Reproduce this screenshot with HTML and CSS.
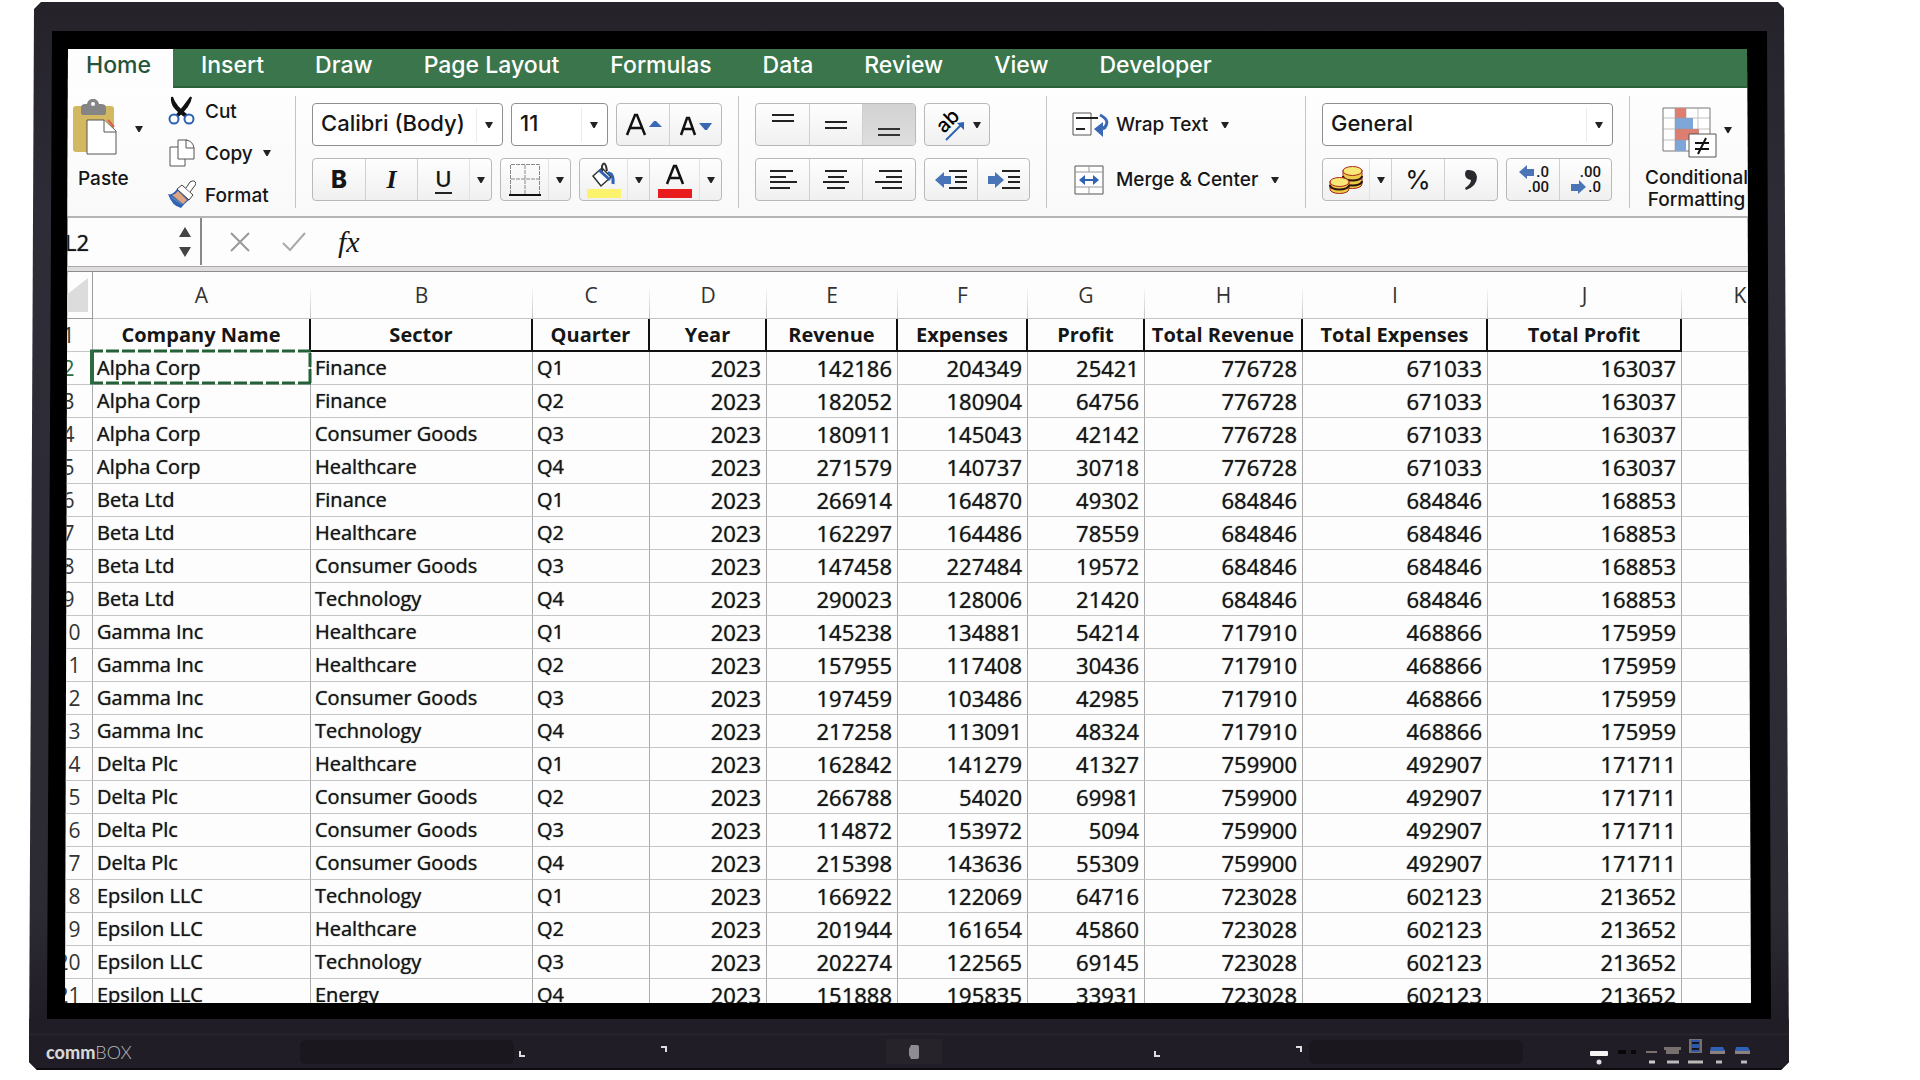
FILE: index.html
```html
<!DOCTYPE html>
<html lang="en">
<head>
<meta charset="utf-8">
<title>Workbook on display</title>
<link rel="stylesheet" href="styles.css">
</head>
<body>
<svg class="defs" aria-hidden="true">
  <symbol id="caret" viewBox="0 0 10 8"><path d="M1 1h8L5.600 7h-1.200z" fill="#222"/></symbol>
</svg>
<div class="display">
  <div class="bezel">
    <main class="screen">
      <nav class="tabs">
        <a class="tab active" href="#">Home</a>
        <a class="tab" href="#">Insert</a>
        <a class="tab" href="#">Draw</a>
        <a class="tab" href="#">Page Layout</a>
        <a class="tab" href="#">Formulas</a>
        <a class="tab" href="#">Data</a>
        <a class="tab" href="#">Review</a>
        <a class="tab" href="#">View</a>
        <a class="tab" href="#">Developer</a>
      </nav>

      <section class="ribbon">
        <div class="clipboard">
          <button class="paste">
            <span class="paste-top">
              <svg width="46" height="56" viewBox="0 0 46 56"><rect x="1" y="7" width="41" height="46" rx="3" fill="#d3b863"/><path d="M9 9c0-4 3-4 6-4 1-7 11-7 12 0 4 0 7 0 7 4v5q0 2-2 2H11q-2 0-2-2z" fill="#858585"/><circle cx="21" cy="5" r="2" fill="#fff"/><path d="M15 21h17l12 11v23H15z" fill="#fff" stroke="#555"/><path d="M32 21v12h12" fill="#fff" stroke="#555"/><path d="M36 21l6 7" stroke="#d9604c" stroke-width="2"/></svg>
              <svg class="caret"><use href="#caret"/></svg>
            </span>
            <span>Paste</span>
          </button>
          <div class="clip-actions">
            <button><svg width="28" height="30" viewBox="0 0 28 30"><path d="M4 1c2 7 6 12 16 19l-2 1C8 14 3 9 4 1zM23 1c-1 7-5 12-13 19l-1-1C15 12 18 8 23 1z" fill="#111" stroke="#111" stroke-width="2"/><ellipse cx="6" cy="23" rx="4.500" ry="4.500" fill="#fff" stroke="#2d5fb3" stroke-width="2"/><ellipse cx="21" cy="23" rx="4.500" ry="4.500" fill="#fff" stroke="#2d5fb3" stroke-width="2"/></svg>Cut</button>
            <button><svg width="28" height="30" viewBox="0 0 28 30"><path d="M2 9h15v19H2z" fill="#fff" stroke="#555"/><path d="M10 2h9l7 8v11H10z" fill="#fff" stroke="#555"/><path d="M18 2v8h8q-1-7-8-8" fill="#fff" stroke="#555"/></svg>Copy<svg class="caret"><use href="#caret"/></svg></button>
            <button><svg width="28" height="30" viewBox="0 0 28 30"><path d="M0 14q4 2 9-5l12 11q-4 3-8 8Q4 26 0 14z" fill="#2f62b5"/><path d="M4 15q4-1 6-4l9 9-4 4z" fill="#e0a480"/><path d="M3 17l11 7" stroke="#5d7cb5" stroke-width="2"/><path d="M9 9l5-4 11 10-4 5z" fill="#fff" stroke="#444"/><path d="M18 8l4-6q5-3 6 2l-6 8" fill="#fff" stroke="#444"/></svg>Format</button>
          </div>
        </div>

        <div class="group">
          <div class="line">
            <label class="combo font-name"><select aria-label="Font"><option>Calibri (Body)</option></select><svg class="caret"><use href="#caret"/></svg></label>
            <label class="combo font-size"><select aria-label="Font size"><option>11</option></select><svg class="caret"><use href="#caret"/></svg></label>
            <div class="set">
              <button class="w52" aria-label="Increase font size"><svg width="38" height="30" viewBox="0 0 38 30"><path d="M3 25L11 5h2l8 20M6 18h12" fill="none" stroke="#111" stroke-width="2.500"/><path d="M25 17l5-6h2l6 6z" fill="#3a68b5"/></svg></button>
              <button class="w52" aria-label="Decrease font size"><svg width="34" height="30" viewBox="0 0 34 30"><path d="M2 25L8 8h2l6 17M4 19h10" fill="none" stroke="#111" stroke-width="2.500"/><path d="M20 13h13l-5 7h-2z" fill="#3a68b5"/></svg></button>
            </div>
          </div>
          <div class="line">
            <div class="set">
              <button class="w52 bold">B</button>
              <button class="w52 italic">I</button>
              <button class="w52"><span class="underlined">U</span></button>
              <button class="drop" aria-label="Underline styles"><svg class="caret"><use href="#caret"/></svg></button>
            </div>
            <div class="set">
              <button class="w47" aria-label="Borders"><svg width="32" height="34" viewBox="0 0 32 34"><path d="M1.500 31V1.500h29V31M16 2v29M2 16h28" fill="none" stroke="#888" stroke-dasharray="4 1"/><path d="M0 32h32" stroke="#111" stroke-width="2"/></svg></button>
              <button class="drop" aria-label="Border styles"><svg class="caret"><use href="#caret"/></svg></button>
            </div>
            <div class="set">
              <button class="w47" aria-label="Fill colour"><svg width="34" height="36" viewBox="0 0 34 36"><path d="M0 27h34v9H0z" fill="#fbf36b"/><path d="M6 14L15 6l9 9-10 9z" fill="#fff" stroke="#333" stroke-width="1.500"/><path d="M15 11V4q2-5 4 0l1 5" fill="none" stroke="#333" stroke-width="2"/><path d="M12 8l11 10M21 11q6 0 5 11" fill="none" stroke="#2f62b5" stroke-width="3"/></svg></button>
              <button class="drop" aria-label="Fill palette"><svg class="caret"><use href="#caret"/></svg></button>
              <button class="w50 ruled" aria-label="Font colour"><svg width="34" height="36" viewBox="0 0 34 36"><path d="M0 27h34v9H0z" fill="#e81c1c"/><path d="M9 22l7-18h2l7 18M12 16h10" fill="none" stroke="#111" stroke-width="2.500"/></svg></button>
              <button class="drop" aria-label="Font palette"><svg class="caret"><use href="#caret"/></svg></button>
            </div>
          </div>
        </div>

        <div class="group">
          <div class="line">
            <div class="set">
              <button class="w53" aria-label="Align top"><svg width="28" height="30"><path d="M3 5h22M3 11h22" stroke="#222" stroke-width="2"/></svg></button>
              <button class="w53" aria-label="Align middle"><svg width="28" height="30"><path d="M3 12h22M3 18h22" stroke="#222" stroke-width="2"/></svg></button>
              <button class="w53 pressed" aria-label="Align bottom"><svg width="28" height="30"><path d="M3 19h22M3 25h22" stroke="#333" stroke-width="2"/></svg></button>
            </div>
            <div class="set">
              <button class="w64" aria-label="Orientation"><svg class="orient" width="34" height="34" viewBox="0 0 34 34"><text x="0" y="0" transform="translate(12 26) rotate(-45)" class="slanted">ab</text><path d="M14 32L29 17" stroke="#2f62b5" stroke-width="2"/><path d="M32 14v8l-7-7z" fill="#2f62b5"/></svg><svg class="caret"><use href="#caret"/></svg></button>
            </div>
          </div>
          <div class="line">
            <div class="set">
              <button class="w53" aria-label="Align left"><svg width="30" height="22"><path d="M2 2h23M2 8h16M2 13h27M2 19h20" stroke="#222" stroke-width="2"/></svg></button>
              <button class="w53" aria-label="Centre"><svg width="30" height="22"><path d="M4 2h22M7 8h16M2 13h26M6 19h18" stroke="#222" stroke-width="2"/></svg></button>
              <button class="w53" aria-label="Align right"><svg width="30" height="22"><path d="M5 2h23M12 8h16M1 13h27M8 19h20" stroke="#222" stroke-width="2"/></svg></button>
            </div>
            <div class="set">
              <button class="w52" aria-label="Decrease indent"><svg width="32" height="22"><path d="M14 2h18M20 8h12M20 13h12M14 19h18" stroke="#222" stroke-width="2"/><path d="M0 11l9-8v4h7v8H9v4z" fill="#4a74b8"/></svg></button>
              <button class="w52" aria-label="Increase indent"><svg width="32" height="22"><path d="M14 2h18M20 8h12M20 13h12M14 19h18" stroke="#222" stroke-width="2"/><path d="M16 11L7 3v4H0v8h7v4z" fill="#4a74b8"/></svg></button>
            </div>
          </div>
        </div>

        <div class="group wrapping">
          <div class="line"><button class="plain"><svg width="38" height="26" viewBox="0 0 38 26"><path d="M1 1h18v22H1z" fill="#fff" stroke="#555"/><path d="M4 6h22M4 17h9" stroke="#222" stroke-width="2"/><path d="M28 3q12 6 3 14" fill="none" stroke="#3a68b5" stroke-width="3"/><path d="M22 17l9-7v4l4 2-4 2v7z" fill="#3a68b5"/></svg>Wrap Text<svg class="caret"><use href="#caret"/></svg></button></div>
          <div class="line"><button class="plain"><svg width="38" height="30" viewBox="0 0 38 30"><path d="M3 1h28v28H3z" fill="#fff" stroke="#555"/><path d="M3 7h28M3 22h28M17 1v6M17 22v7" stroke="#999"/><path d="M10 15h14" stroke="#2f62b5" stroke-width="2"/><path d="M7 15l6-5v10zM27 15l-6-5v10z" fill="#2f62b5"/></svg>Merge &amp; Center<svg class="caret"><use href="#caret"/></svg></button></div>
        </div>

        <div class="group">
          <div class="line">
            <label class="combo number-format"><select aria-label="Number format"><option>General</option></select><svg class="caret"><use href="#caret"/></svg></label>
          </div>
          <div class="line">
            <div class="set">
              <button class="w46" aria-label="Accounting format"><svg width="36" height="30" viewBox="0 0 36 30"><g stroke="#a8281c" fill="#edca48"><path d="M15 5v14c0 6 19 6 19 0V5z"/><path d="M15 11c0 6 19 6 19 0M15 16c0 6 19 6 19 0" fill="none" stroke="#2a1410" stroke-width="2"/><ellipse cx="24.500" cy="6" rx="9.500" ry="4.500" fill="#f8e877"/><path d="M2 16v8c0 6 19 6 19 0v-8z"/><path d="M2 20c0 6 19 6 19 0" fill="none" stroke="#2a1410" stroke-width="2"/><ellipse cx="11.500" cy="17" rx="9.500" ry="4.500" fill="#f8e877"/></g></svg></button>
              <button class="drop" aria-label="Currency"><svg class="caret"><use href="#caret"/></svg></button>
              <button class="w53 ruled percent">%</button>
              <button class="w53" aria-label="Comma style"><svg width="14" height="22" viewBox="0 0 14 22"><path d="M3 1Q12 0 13 8q0 9-11 13l-1-2q6-4 6-8-6-1-6-6 0-3 2-4z" fill="#2a2a2e"/></svg></button>
            </div>
            <div class="set">
              <button class="w52 decimals" aria-label="Increase decimal"><span><svg width="15" height="14"><path d="M0 7l8-7v4h7v7H8v3z" fill="#4a74b8"/></svg>.0</span><span>.00</span></button>
              <button class="w52 decimals" aria-label="Decrease decimal"><span>.00</span><span><svg width="15" height="14"><path d="M15 7L8 0v4H0v7h7v3z" fill="#4a74b8"/></svg>.0</span></button>
            </div>
          </div>
        </div>

        <button class="conditional">
          <span class="cond-top">
            <svg width="55" height="52" viewBox="0 0 55 52"><path d="M1 1h47v43H1z" fill="#fff" stroke="#777"/><path d="M13 1h11v10H13zM13 22h24v11H13z" fill="#dd7e70"/><path d="M13 11h18v11H13zM13 33h11v11H13z" fill="#7fa6d8"/><path d="M13 1v43M24 1v10M36 1v43M1 11h47M1 22h47M1 33h47" stroke="#999" opacity=".6"/><path d="M27 27h27v23H27z" fill="#fff" stroke="#555"/><path d="M33 36h14M33 42h14M44 31l-8 16" stroke="#111" stroke-width="2"/></svg>
            <svg class="caret"><use href="#caret"/></svg>
          </span>
          <span>Conditional<br>Formatting</span>
        </button>
      </section>

      <section class="formula-bar">
        <div class="name-box">
          <input type="text" value="L2" aria-label="Name box">
          <svg width="14" height="32" viewBox="0 0 14 32"><path d="M1 11L7 1l6 10zM1 21h12L7 31z" fill="#444"/></svg>
        </div>
        <button aria-label="Cancel"><svg width="20" height="20"><path d="M1 1l18 18M19 1L1 19" stroke="#999" stroke-width="2"/></svg></button>
        <button aria-label="Enter"><svg width="24" height="20"><path d="M1 11l7 7L23 1" fill="none" stroke="#aaa" stroke-width="2"/></svg></button>
        <button class="fx">fx</button>
        <input class="formula" type="text" aria-label="Formula">
      </section>

      <table class="sheet">
        <colgroup><col class="c-n"><col class="c-a"><col class="c-b"><col class="c-c"><col class="c-c"><col class="c-e"><col class="c-f"><col class="c-c"><col class="c-h"><col class="c-i"><col class="c-j"><col></colgroup>
        <thead>
          <tr class="letters"><th class="corner"><svg width="43" height="34"><path d="M43 0v34H0z" fill="#dcdcdc"/></svg></th><th>A</th><th>B</th><th>C</th><th>D</th><th>E</th><th>F</th><th>G</th><th>H</th><th>I</th><th>J</th><th>K</th></tr>
        </thead>
        <tbody>
          <tr class="titles"><th>1</th><td>Company Name</td><td>Sector</td><td>Quarter</td><td>Year</td><td>Revenue</td><td>Expenses</td><td>Profit</td><td>Total Revenue</td><td>Total Expenses</td><td>Total Profit</td><td></td></tr>
          <tr class="current"><th>2</th><td class="copied">Alpha Corp<svg class="ants"><path d="M0 2h222M0 34h222" stroke="#246038" stroke-width="3" stroke-dasharray="13 3"/><path d="M220 4v14M220 20v14" stroke="#246038" stroke-width="3"/><path d="M2 1v34" stroke="#2a6b3f" stroke-width="4"/></svg></td><td>Finance</td><td>Q1</td><td>2023</td><td>142186</td><td>204349</td><td>25421</td><td>776728</td><td>671033</td><td>163037</td><td></td></tr>
          <tr><th>3</th><td>Alpha Corp</td><td>Finance</td><td>Q2</td><td>2023</td><td>182052</td><td>180904</td><td>64756</td><td>776728</td><td>671033</td><td>163037</td><td></td></tr>
          <tr><th>4</th><td>Alpha Corp</td><td>Consumer Goods</td><td>Q3</td><td>2023</td><td>180911</td><td>145043</td><td>42142</td><td>776728</td><td>671033</td><td>163037</td><td></td></tr>
          <tr><th>5</th><td>Alpha Corp</td><td>Healthcare</td><td>Q4</td><td>2023</td><td>271579</td><td>140737</td><td>30718</td><td>776728</td><td>671033</td><td>163037</td><td></td></tr>
          <tr><th>6</th><td>Beta Ltd</td><td>Finance</td><td>Q1</td><td>2023</td><td>266914</td><td>164870</td><td>49302</td><td>684846</td><td>684846</td><td>168853</td><td></td></tr>
          <tr><th>7</th><td>Beta Ltd</td><td>Healthcare</td><td>Q2</td><td>2023</td><td>162297</td><td>164486</td><td>78559</td><td>684846</td><td>684846</td><td>168853</td><td></td></tr>
          <tr><th>8</th><td>Beta Ltd</td><td>Consumer Goods</td><td>Q3</td><td>2023</td><td>147458</td><td>227484</td><td>19572</td><td>684846</td><td>684846</td><td>168853</td><td></td></tr>
          <tr><th>9</th><td>Beta Ltd</td><td>Technology</td><td>Q4</td><td>2023</td><td>290023</td><td>128006</td><td>21420</td><td>684846</td><td>684846</td><td>168853</td><td></td></tr>
          <tr><th>10</th><td>Gamma Inc</td><td>Healthcare</td><td>Q1</td><td>2023</td><td>145238</td><td>134881</td><td>54214</td><td>717910</td><td>468866</td><td>175959</td><td></td></tr>
          <tr><th>11</th><td>Gamma Inc</td><td>Healthcare</td><td>Q2</td><td>2023</td><td>157955</td><td>117408</td><td>30436</td><td>717910</td><td>468866</td><td>175959</td><td></td></tr>
          <tr><th>12</th><td>Gamma Inc</td><td>Consumer Goods</td><td>Q3</td><td>2023</td><td>197459</td><td>103486</td><td>42985</td><td>717910</td><td>468866</td><td>175959</td><td></td></tr>
          <tr><th>13</th><td>Gamma Inc</td><td>Technology</td><td>Q4</td><td>2023</td><td>217258</td><td>113091</td><td>48324</td><td>717910</td><td>468866</td><td>175959</td><td></td></tr>
          <tr><th>14</th><td>Delta Plc</td><td>Healthcare</td><td>Q1</td><td>2023</td><td>162842</td><td>141279</td><td>41327</td><td>759900</td><td>492907</td><td>171711</td><td></td></tr>
          <tr><th>15</th><td>Delta Plc</td><td>Consumer Goods</td><td>Q2</td><td>2023</td><td>266788</td><td>54020</td><td>69981</td><td>759900</td><td>492907</td><td>171711</td><td></td></tr>
          <tr><th>16</th><td>Delta Plc</td><td>Consumer Goods</td><td>Q3</td><td>2023</td><td>114872</td><td>153972</td><td>5094</td><td>759900</td><td>492907</td><td>171711</td><td></td></tr>
          <tr><th>17</th><td>Delta Plc</td><td>Consumer Goods</td><td>Q4</td><td>2023</td><td>215398</td><td>143636</td><td>55309</td><td>759900</td><td>492907</td><td>171711</td><td></td></tr>
          <tr><th>18</th><td>Epsilon LLC</td><td>Technology</td><td>Q1</td><td>2023</td><td>166922</td><td>122069</td><td>64716</td><td>723028</td><td>602123</td><td>213652</td><td></td></tr>
          <tr><th>19</th><td>Epsilon LLC</td><td>Healthcare</td><td>Q2</td><td>2023</td><td>201944</td><td>161654</td><td>45860</td><td>723028</td><td>602123</td><td>213652</td><td></td></tr>
          <tr><th>20</th><td>Epsilon LLC</td><td>Technology</td><td>Q3</td><td>2023</td><td>202274</td><td>122565</td><td>69145</td><td>723028</td><td>602123</td><td>213652</td><td></td></tr>
          <tr><th>21</th><td>Epsilon LLC</td><td>Energy</td><td>Q4</td><td>2023</td><td>151888</td><td>195835</td><td>33931</td><td>723028</td><td>602123</td><td>213652</td><td></td></tr>
        </tbody>
      </table>
    </main>
  </div>

  <footer class="chin">
    <div class="side">
      <div class="brand"><b>comm</b>BOX</div>
      <div class="grille"></div>
      <svg class="mark" viewBox="0 0 8 14"><path d="M2 6v5h5" fill="none" stroke="#ddd" stroke-width="2"/></svg>
      <svg class="mark far" viewBox="0 0 8 14"><path d="M1 2h5v5" fill="none" stroke="#ddd" stroke-width="2"/></svg>
    </div>
    <div class="sensor"><svg width="12" height="14"><path d="M3 0h6q2 0 2 2v10q0 2-2 2H3L1 10V4z" fill="#8d8c90"/></svg></div>
    <div class="side right">
      <svg class="mark" viewBox="0 0 8 14"><path d="M2 6v5h5" fill="none" stroke="#ddd" stroke-width="2"/></svg>
      <svg class="mark far" viewBox="0 0 8 14"><path d="M1 2h5v5" fill="none" stroke="#ddd" stroke-width="2"/></svg>
      <div class="grille"></div>
      <svg class="ports" width="164" height="28" viewBox="0 0 164 28">
        <rect x="1" y="13" width="18" height="5" rx="1" fill="#f4f4f4"/><circle cx="10" cy="24" r="2.500" fill="#ddd"/>
        <path d="M29 14h8M42 14h5" stroke="#08070a" stroke-width="4"/>
        <path d="M57 14h11" stroke="#7a706e" stroke-width="2"/><path d="M60 24h6" stroke="#ccc" stroke-width="3"/>
        <path d="M75 9h17v3H75zM77 12h13v4H77z" fill="#77706f"/><path d="M78 24h12" stroke="#bbb" stroke-width="3"/>
        <path d="M100 1h13v14h-13z" fill="#77706f"/><path d="M102 2h9v12h-9z" fill="#2d5aa8"/><path d="M103 5h7M103 11h7" stroke="#15151c" stroke-width="2"/><path d="M99 24h15" stroke="#bbb" stroke-width="3"/>
        <path d="M121 12h15v4h-15z" fill="#8b8280"/><path d="M122 9h12l2 4h-15z" fill="#2f62b5"/><path d="M127 24h6" stroke="#bbb" stroke-width="3"/>
        <path d="M146 12h15v4h-15z" fill="#8b8280"/><path d="M147 9h12l2 4h-15z" fill="#2f62b5"/><path d="M152 24h6" stroke="#bbb" stroke-width="3"/>
      </svg>
    </div>
  </footer>
</div>
</body>
</html>
```
FILE: styles.css
```css
* { box-sizing: border-box; }

body {
  margin: 0;
  background: #fff;
  font-family: Inter, "Liberation Sans", sans-serif;
  color: #161616;
  overflow: hidden;
}

button, select, input {
  font: inherit;
  color: inherit;
  border: 0;
  padding: 0;
  margin: 0;
  background: none;
}

svg { flex: none; display: block; }
.defs { display: none; }
.caret { width: 10px; height: 8px; }

/* Display housing */
.display {
  display: flex;
  flex-direction: column;
  height: calc(100vh - 12px);
  margin: 2px 131px 0 29px;
  padding: 29px 18px 0;
  background: linear-gradient(#25222a, #2e2c36 20%, #2c2a33 85%, #201d26 95%);
  clip-path: polygon(12px 0, calc(100% - 11px) 0, calc(100% - 5px) 6px, 100% calc(100% - 8px), calc(100% - 8px) 100%, 8px 100%, 0 calc(100% - 8px), 5px 7px);
}

.bezel {
  flex: 1;
  min-height: 0;
  padding: 18px 20px 16px 18px;
  background: #000;
  clip-path: polygon(5px 0, calc(100% - 4px) 0, 100% 100%, 0 100%);
}

.screen {
  height: 100%;
  overflow: hidden;
  background: #fdfdfd;
  clip-path: polygon(3px 0, calc(100% - 4px) 0, 100% 100%, 0 100%);
}

/* Tabs */
.tabs {
  display: flex;
  gap: 1px;
  height: 39px;
  background: #3a754b;
  border-bottom: 2px solid #2a6138;
}

.tab {
  padding: 0 25px;
  font-size: 23px;
  font-weight: 500;
  line-height: 32px;
  color: #fff;
  text-decoration: none;
}

.tab.active {
  height: 39px;
  margin-right: 2px;
  padding: 0 22px 0 21px;
  background: #fdfdfd;
  color: #24543a;
}

/* Ribbon */
.ribbon {
  display: flex;
  height: 130px;
  padding: 8px 0;
  border-bottom: 2px solid #b4b4b4;
  background: linear-gradient(#fefefe, #f9f9f9);
  font-size: 19px;
  font-weight: 500;
  white-space: nowrap;
}

.clipboard {
  display: flex;
  flex: none;
  width: 231px;
  padding-left: 7px;
  border-right: 1px solid #c4c4c4;
}

.paste {
  display: flex;
  flex-direction: column;
  width: 76px;
  padding-top: 3px;
  gap: 12px;
  text-align: left;
}
.paste > span:last-child { padding-left: 6px; }
.paste-top { display: flex; align-items: center; gap: 16px; }
.paste-top .caret { margin-top: 4px; }

.clip-actions {
  display: flex;
  flex-direction: column;
  gap: 12px;
  padding-left: 20px;
}
.clip-actions button {
  display: flex;
  align-items: center;
  gap: 9px;
  height: 30px;
}

.group {
  display: flex;
  flex: none;
  flex-direction: column;
  gap: 12px;
  padding: 7px 16px 0;
  border-right: 1px solid #c4c4c4;
}

.line { display: flex; gap: 8px; height: 43px; }

.combo {
  display: flex;
  align-items: center;
  padding: 0 8px;
  border: 1px solid #8f8f8f;
  border-radius: 4px;
  background: #fff;
  font-size: 22px;
}
.combo select {
  flex: 1;
  min-width: 0;
  height: 34px;
  margin-right: 7px;
  padding-bottom: 3px;
  border-right: 1px solid #ececec;
  appearance: none;
}
.font-name { width: 191px; }
.font-size { width: 97px; }
.number-format { width: 291px; }

.set {
  display: flex;
  border: 1px solid #b9b9b9;
  border-radius: 4px;
  background: linear-gradient(#fefefe, #f0f0f0);
  overflow: hidden;
}
.set button {
  display: flex;
  align-items: center;
  justify-content: center;
  font-size: 24px;
}
.set button + button:not(.drop), .set .ruled { border-left: 1px solid #d0d0d0; }
.set .w46 { width: 46px; }
.set .w47 { width: 47px; }
.set .w50 { width: 50px; }
.set .w52 { width: 52px; }
.set .w53 { width: 53px; }
.set .w64 { width: 64px; gap: 6px; }
.set .drop { width: 22px; border-left: 1px solid #e2e2e2; }
.set .pressed { background: linear-gradient(#d2d2d2, #dedede); }
.set .bold { font-weight: 800; }
.set .italic { font-family: "Liberation Serif", serif; font-style: italic; font-weight: 700; font-size: 26px; }
.set .percent { font-weight: 400; font-size: 26px; }
.underlined { border-bottom: 2px solid #222; line-height: 26px; font-size: 22px; }
.orient { overflow: visible; }
.slanted { font: 500 20px Inter, sans-serif; }

.set .decimals {
  flex-direction: column;
  align-items: flex-end;
  padding-right: 10px;
  font: 500 15px/15px Roboto, sans-serif;
}
.decimals span { display: flex; gap: 2px; }

.wrapping { width: 259px; padding-left: 25px; }
.plain { display: flex; align-items: center; gap: 6px; }
.plain .caret { margin-left: 6px; }

.conditional {
  flex: none;
  padding: 11px 0 0 15px;
  line-height: 22px;
  text-align: center;
}
.cond-top {
  display: flex;
  align-items: center;
  gap: 6px;
  margin-bottom: 8px;
  padding-left: 17px;
}
.cond-top .caret { margin-bottom: 7px; }

/* Formula bar */
.formula-bar {
  display: flex;
  align-items: center;
  height: 53px;
  padding-bottom: 2px;
  gap: 32px;
  border-bottom: 4px solid #dedcdc;
  box-shadow: inset 0 -1px #aaa;
}
.name-box {
  display: flex;
  align-items: center;
  justify-content: space-between;
  width: 137px;
  height: 47px;
  margin-right: -4px;
  padding-right: 8px;
  border-right: 2px solid #888;
  font-family: "Open Sans", sans-serif;
  font-size: 22px;
}
.name-box input { width: 90px; text-shadow: 0 0 1px #444; }
.fx { font: italic 30px "Liberation Serif", serif; }
.formula { flex: 1; }

/* Sheet */
.sheet {
  width: calc(100% + 68px);
  margin-left: -20px;
  table-layout: fixed;
  border-collapse: separate;
  border-spacing: 0;
  border-top: 1px solid #8d8d8d;
  font-family: "Open Sans", "Noto Sans", sans-serif;
  font-size: 22px;
  line-height: 32px;
  white-space: nowrap;
}
.c-n { width: 48px; }
.c-a { width: 218px; }
.c-b { width: 222px; }
.c-c { width: 117px; }
.c-e { width: 131px; }
.c-f { width: 130px; }
.c-h { width: 158px; }
.c-i { width: 185px; }
.c-j { width: 194px; }

.sheet td, .sheet th {
  height: 33px;
  padding: 0 5px;
  border-right: 1px solid #ababab;
  border-bottom: 1px solid #c6c6c6;
}
.sheet td { text-align: right; text-shadow: 0 0 1px #444; }
.sheet td:nth-child(-n+4) { padding: 0 4px; text-align: left; font-size: 20px; }
.sheet th { padding: 0; font-size: 21px; font-weight: 400; text-align: center; color: #333; }
.sheet .current th { color: #2a6b3f; }

.sheet .letters th {
  height: 47px;
  border-right: 1px solid;
  border-image: linear-gradient(#fdfdfd 30%, #c4c4c4) 1;
  border-bottom: 1px solid #aaa;
}
.sheet .letters .corner { border-image: none; border-color: #9a9a9a; }

.sheet .titles td {
  padding: 0;
  border-right: 2px solid #111;
  border-bottom: 2px solid #111;
  font-size: 20px;
  font-weight: 700;
  line-height: 31px;
  text-align: center;
  text-shadow: none;
}
.sheet .titles td:nth-child(2) { border-bottom-color: #fdfdfd; }
.sheet .titles td:last-child { border-color: #c6c6c6; border-width: 0 0 1px; }

.sheet .copied { position: relative; }
.ants {
  position: absolute;
  top: -3px;
  left: -3px;
  width: 222px;
  height: 36px;
}

/* Lower housing */
.chin {
  display: flex;
  flex: none;
  align-items: center;
  height: 51px;
  margin: 0 -18px;
  padding: 16px 8px 0 17px;
  background: linear-gradient(#201d26 14px, #2a2730 15px, #201d26 17px);
  border-bottom: 2px solid #0d0b10;
}
.side { display: flex; flex: 1; align-items: center; }
.brand {
  width: 254px;
  font: 300 18px Lato, sans-serif;
  color: #bbb;
}
.brand b { font-weight: 900; color: #d6d6d6; }
.grille { width: 214px; height: 24px; border-radius: 6px; background: #1a171f; }
.mark { width: 8px; height: 14px; margin-left: 4px; }
.mark.far { margin-left: 134px; }
.sensor {
  display: flex;
  align-items: center;
  justify-content: center;
  width: 56px;
  height: 25px;
  background: #26232b;
}
.right { justify-content: flex-end; }
.right .grille { margin-left: 6px; }
.ports { margin: 0 28px 0 66px; }
```
